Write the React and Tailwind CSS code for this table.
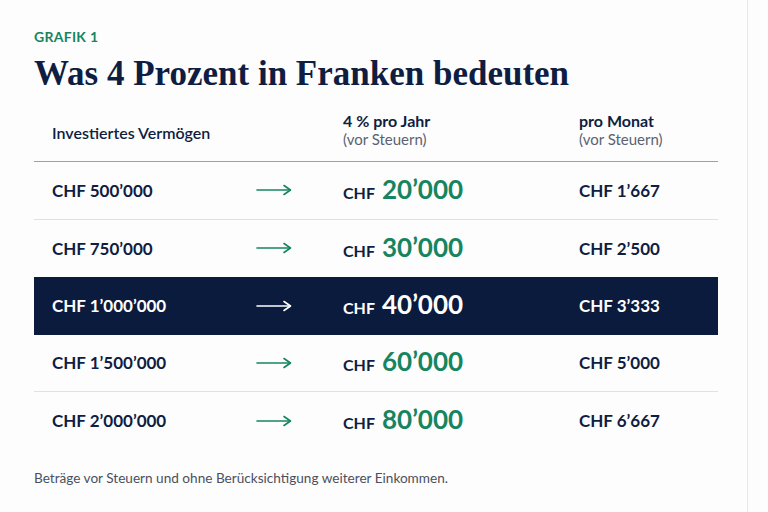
import React from "react";

const rows = [
  { capital: "500’000", year: "20’000", month: "1’667" },
  { capital: "750’000", year: "30’000", month: "2’500" },
  { capital: "1’000’000", year: "40’000", month: "3’333", highlight: true },
  { capital: "1’500’000", year: "60’000", month: "5’000" },
  { capital: "2’000’000", year: "80’000", month: "6’667" },
];

function Arrow({ className }) {
  return (
    <svg width="36" height="12" viewBox="0 0 36 12" fill="none" className={className}>
      <path d="M1 6H34" stroke="currentColor" strokeWidth="1.6" strokeLinecap="round" />
      <path d="M28 1.5L34.5 6L28 10.5" stroke="currentColor" strokeWidth="1.6" strokeLinecap="round" strokeLinejoin="round" />
    </svg>
  );
}

export default function App() {
  return (
    <div
      className="w-[768px] h-[512px] bg-[#fdfdfd] flex overflow-hidden text-[#0f1d42]"
      style={{ fontFamily: "Lato, 'Noto Sans', sans-serif" }}
    >
      <div className="w-[748px] pl-[34px] pr-[29px] pt-[29px] border-r border-[#e6e7ea]">
        <div className="text-[14px] font-bold tracking-[0.02em] text-[#16855f] leading-4">GRAFIK 1</div>
        <h1
          className="mt-[9px] text-[35px] font-bold leading-[40px] text-[#0f1d42]"
          style={{ fontFamily: "'Liberation Serif', 'DejaVu Serif', serif" }}
        >
          Was 4 Prozent in Franken bedeuten
        </h1>

        {/* Tabelle */}
        <div className="mt-[16px]">
          <div className="grid grid-cols-[222px_87px_236px_1fr] items-center h-[52px] border-b border-[#9aa1ad]">
            <div className="pl-[18px] pb-[6px] text-[16px] font-semibold">Investiertes Vermögen</div>
            <div />
            <div className="leading-[19px] pb-[11px]">
              <div className="text-[16px] font-bold">4 % pro Jahr</div>
              <div className="text-[15px] text-[#5b6272]">(vor Steuern)</div>
            </div>
            <div className="leading-[19px] pb-[11px]">
              <div className="text-[16px] font-bold">pro Monat</div>
              <div className="text-[15px] text-[#5b6272]">(vor Steuern)</div>
            </div>
          </div>

          {rows.map((r, i) => (
            <div
              key={r.capital}
              className={`grid grid-cols-[222px_87px_236px_1fr] items-center h-[57.5px] ${
                r.highlight ? "bg-[#0b1b3d] text-white" : "text-[#0f1d42]"
              } ${i < rows.length - 1 && !r.highlight && !rows[i + 1].highlight ? "border-b border-[#dfe1e6]" : ""}`}
            >
              <div className="pl-[18px] text-[17px] font-bold">CHF {r.capital}</div>
              <div className="flex">
                <Arrow className={r.highlight ? "text-white" : "text-[#16855f]"} />
              </div>
              <div className="flex items-baseline gap-[7px]">
                <span className="text-[16px] font-bold">CHF</span>
                <span className={`text-[26px] font-bold leading-none ${r.highlight ? "text-white" : "text-[#16855f]"}`}>
                  {r.year}
                </span>
              </div>
              <div className="text-[17px] font-bold">CHF {r.month}</div>
            </div>
          ))}
        </div>

        <p className="mt-[18px] text-[13.6px] text-[#4a5060]">
          Beträge vor Steuern und ohne Berücksichtigung weiterer Einkommen.
        </p>
      </div>
    </div>
  );
}
